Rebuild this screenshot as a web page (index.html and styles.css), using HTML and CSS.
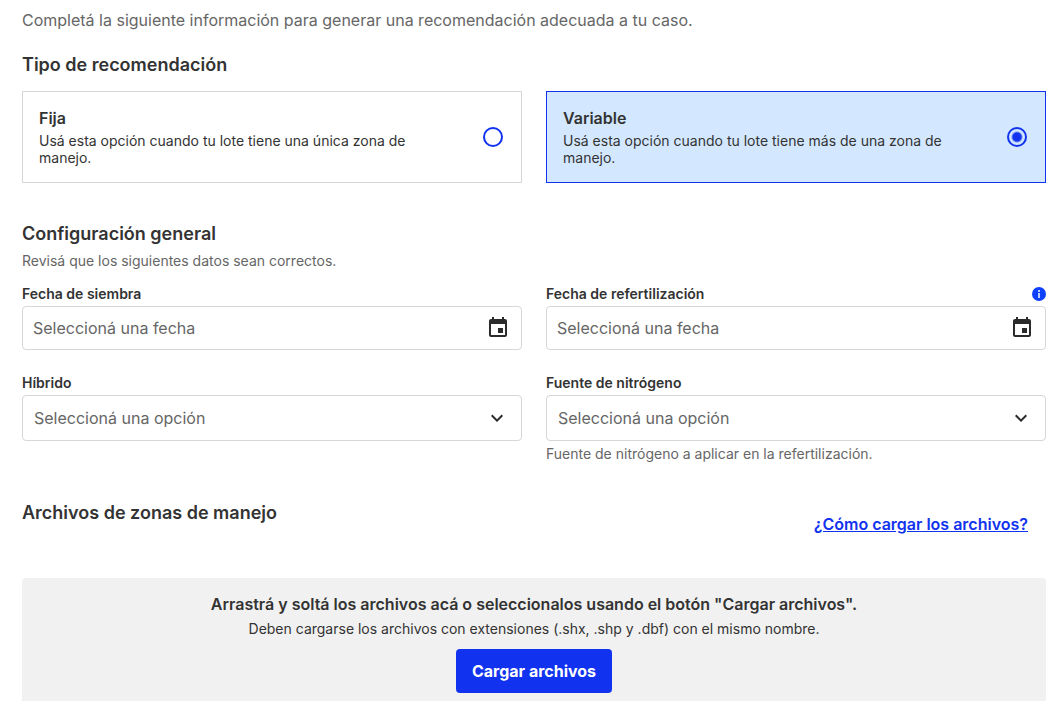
FILE: index.html
```html
<!DOCTYPE html>
<html lang="es">
<head>
    <meta charset="UTF-8">
    <meta name="viewport" content="width=device-width, initial-scale=1.0">
    <title>Recomendación</title>
    <link rel="stylesheet" href="styles.css">
</head>
<body>
    <form class="page">
        <p class="intro">Completá la siguiente información para generar una recomendación adecuada a tu caso.</p>

        <!-- Tipo de recomendación -->
        <h2>Tipo de recomendación</h2>
        <div class="grid">
            <label class="card">
                <span class="card-text">
                    <span class="card-title">Fija</span>
                    <span class="card-desc">Usá esta opción cuando tu lote tiene una única zona de manejo.</span>
                </span>
                <input type="radio" name="tipo" value="fija">
            </label>
            <label class="card">
                <span class="card-text">
                    <span class="card-title">Variable</span>
                    <span class="card-desc">Usá esta opción cuando tu lote tiene más de una zona de manejo.</span>
                </span>
                <input type="radio" name="tipo" value="variable" checked>
            </label>
        </div>

        <!-- Configuración general -->
        <h2 class="config-title">Configuración general</h2>
        <p class="hint">Revisá que los siguientes datos sean correctos.</p>
        <div class="grid fields">
            <div class="field">
                <div class="field-label">
                    <label for="siembra">Fecha de siembra</label>
                </div>
                <div class="date-box">
                    <input type="text" id="siembra" placeholder="Seleccioná una fecha">
                    <svg class="calendar" viewBox="0 0 24 24" aria-hidden="true">
                        <path d="M19 3h-1V1h-2v2H8V1H6v2H5c-1.1 0-2 .9-2 2v14c0 1.1.9 2 2 2h14c1.1 0 2-.9 2-2V5c0-1.1-.9-2-2-2zm0 16H5V8h14v11zm-7-7h5v5h-5z"/>
                    </svg>
                </div>
            </div>
            <div class="field">
                <div class="field-label">
                    <label for="refertilizacion">Fecha de refertilización</label>
                    <svg class="info" viewBox="0 0 14 14" aria-hidden="true">
                        <circle cx="7" cy="7" r="7" fill="#0d40ff"/>
                        <path d="M6 3h2v2H6zM6 6h2v5H6z" fill="#bccbff"/>
                    </svg>
                </div>
                <div class="date-box">
                    <input type="text" id="refertilizacion" placeholder="Seleccioná una fecha">
                    <svg class="calendar" viewBox="0 0 24 24" aria-hidden="true">
                        <path d="M19 3h-1V1h-2v2H8V1H6v2H5c-1.1 0-2 .9-2 2v14c0 1.1.9 2 2 2h14c1.1 0 2-.9 2-2V5c0-1.1-.9-2-2-2zm0 16H5V8h14v11zm-7-7h5v5h-5z"/>
                    </svg>
                </div>
            </div>
            <div class="field">
                <div class="field-label">
                    <label for="hibrido">Híbrido</label>
                </div>
                <div class="select-box">
                    <select id="hibrido">
                        <option>Seleccioná una opción</option>
                    </select>
                    <svg class="chevron" viewBox="0 0 24 24" aria-hidden="true">
                        <path d="M7.4 8.6 12 13.2l4.6-4.6L18 10l-6 6-6-6z"/>
                    </svg>
                </div>
            </div>
            <div class="field">
                <div class="field-label">
                    <label for="fuente">Fuente de nitrógeno</label>
                </div>
                <div class="select-box">
                    <select id="fuente">
                        <option>Seleccioná una opción</option>
                    </select>
                    <svg class="chevron" viewBox="0 0 24 24" aria-hidden="true">
                        <path d="M7.4 8.6 12 13.2l4.6-4.6L18 10l-6 6-6-6z"/>
                    </svg>
                </div>
                <p class="help">Fuente de nitrógeno a aplicar en la refertilización.</p>
            </div>
        </div>

        <!-- Archivos -->
        <div class="files-header">
            <h2>Archivos de zonas de manejo</h2>
            <a href="#">¿Cómo cargar los archivos?</a>
        </div>
        <div class="dropzone">
            <p class="drop-title">Arrastrá y soltá los archivos acá o seleccionalos usando el botón "Cargar archivos".</p>
            <p class="drop-desc">Deben cargarse los archivos con extensiones (.shx, .shp y .dbf) con el mismo nombre.</p>
            <button type="button">Cargar archivos</button>
        </div>
    </form>
</body>
</html>
```
FILE: styles.css
```css
* {
    box-sizing: border-box;
}

body {
    font-family: Inter, "Liberation Sans", sans-serif;
    font-size: 14px;
    line-height: 18px;
    color: #333;
    background-color: #fff;
    margin: 0;
}

h2, p {
    margin: 0;
}

h2 {
    font-size: 18px;
    line-height: 24px;
    font-weight: 600;
}

.page {
    padding: 8px 17px 0 22px;
}

.intro {
    font-size: 16px;
    line-height: 24px;
    color: #666;
    margin-bottom: 21px;
}

.grid {
    display: grid;
    grid-template-columns: 1fr 1fr;
    column-gap: 24px;
}

/* Tarjetas de tipo */
.card {
    display: flex;
    align-items: center;
    justify-content: space-between;
    gap: 32px;
    margin-top: 14px;
    padding: 16px 18px 16px 16px;
    border: 1px solid #d6d6d6;
    cursor: pointer;
}

.card:has(input:checked) {
    background-color: #d3e8ff;
    border-color: #1132ee;
}

.card-text {
    display: flex;
    flex-direction: column;
    gap: 4px;
}

.card-title {
    font-size: 16px;
    line-height: 20px;
    font-weight: 600;
}

.card-desc {
    line-height: 17px;
}

.card input {
    appearance: none;
    flex: none;
    width: 20px;
    height: 20px;
    margin: 0;
    border: 2px solid #1132ee;
    border-radius: 50%;
    background-color: #fff;
}

.card input:checked {
    background: radial-gradient(circle, #1132ee 4px, transparent 6px);
}

/* Campos */
.config-title {
    margin-top: 39px;
}

.hint {
    margin-top: 6px;
    color: #666;
}

.fields {
    margin-top: 15px;
    row-gap: 24px;
}

.field-label {
    display: flex;
    align-items: center;
    justify-content: space-between;
    margin-bottom: 3px;
    font-weight: 600;
}

.info {
    width: 14px;
    height: 14px;
}

.date-box, .select-box {
    display: grid;
    align-items: center;
}

.date-box > *, .select-box > * {
    grid-area: 1 / 1;
}

.date-box input, .select-box select {
    width: 100%;
    height: 44px;
    padding: 0 48px 0 10px;
    border: 1px solid #d6d6d6;
    border-radius: 4px;
    background-color: #fff;
    font-family: inherit;
    font-size: 16px;
    color: #666;
}

.date-box input::placeholder {
    color: #666;
    opacity: 1;
}

.select-box select {
    appearance: none;
    height: 46px;
    padding-left: 11px;
}

.calendar, .chevron {
    justify-self: end;
    width: 24px;
    height: 24px;
    margin-right: 12px;
    fill: #2b2b2b;
    pointer-events: none;
}

.chevron {
    margin-right: 13px;
}

.help {
    margin-top: 4px;
    color: #666;
}

/* Archivos */
.files-header {
    display: flex;
    justify-content: space-between;
    margin-top: 38px;
    padding-right: 18px;
}

.files-header a {
    margin-top: 11px;
    font-size: 16px;
    line-height: 24px;
    font-weight: 600;
    color: #1132ee;
}

.dropzone {
    display: flex;
    flex-direction: column;
    align-items: center;
    margin-top: 42px;
    padding: 14px 16px 8px;
    border-radius: 4px 4px 0 0;
    background-color: #f1f1f1;
    text-align: center;
}

.drop-title {
    font-size: 16px;
    line-height: 24px;
    font-weight: 600;
    margin-bottom: 4px;
}

.dropzone button {
    height: 44px;
    margin-top: 11px;
    padding: 0 16px;
    border: none;
    border-radius: 4px;
    background-color: #1132ee;
    color: #fff;
    font-family: inherit;
    font-size: 16px;
    font-weight: 700;
    cursor: pointer;
}
```
